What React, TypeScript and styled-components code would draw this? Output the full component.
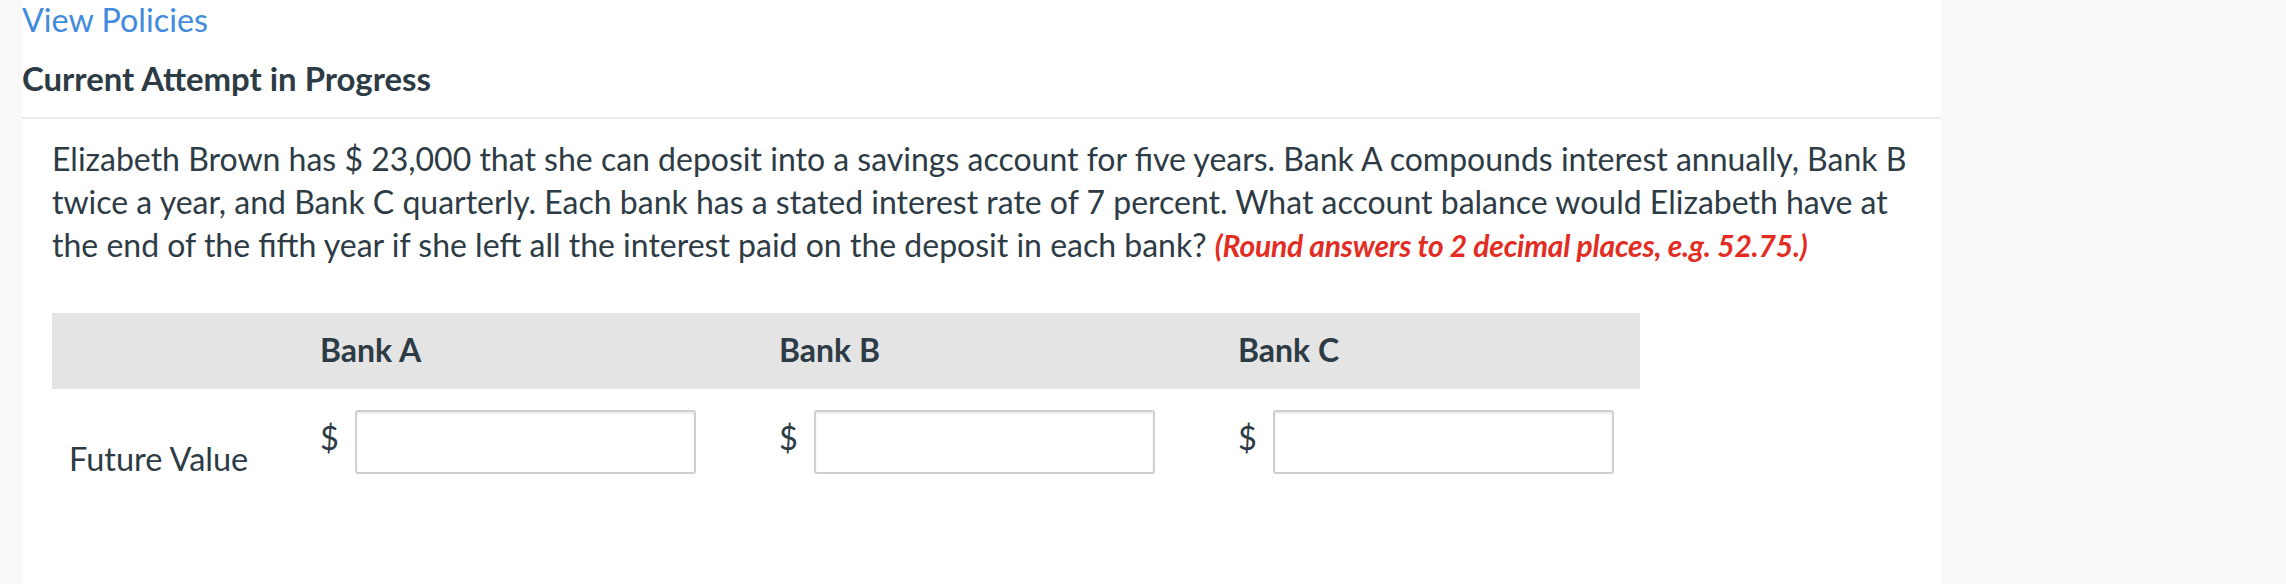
import React from "react";
import styled, { createGlobalStyle } from "styled-components";

const GlobalStyle = createGlobalStyle`
  html, body {
    margin: 0;
    padding: 0;
    background: #f9f9f9;
  }
  body {
    font-family: Lato, "Liberation Sans", sans-serif;
    color: #2d3b45;
  }
`;

const banks = ["Bank A", "Bank B", "Bank C"];

export default function App() {
  return (
    <>
      <GlobalStyle />
      <Page>
        <Panel>
          <PolicyLink href="#">View Policies</PolicyLink>
          <AttemptTitle>Current Attempt in Progress</AttemptTitle>
          <Question>
            <Prompt>
              Elizabeth Brown has $ 23,000 that she can deposit into a savings
              account for five years. Bank A compounds interest annually, Bank B
              twice a year, and Bank C quarterly. Each bank has a stated
              interest rate of 7 percent. What account balance would Elizabeth
              have at the end of the fifth year if she left all the interest
              paid on the deposit in each bank?{" "}
              <Hint>(Round answers to 2 decimal places, e.g. 52.75.)</Hint>
            </Prompt>

            <AnswerTable>
              <HeaderRow>
                <HeadCell />
                {banks.map((bank) => (
                  <HeadCell key={bank}>{bank}</HeadCell>
                ))}
              </HeaderRow>
              <BodyRow>
                <RowLabel>Future Value</RowLabel>
                {banks.map((bank) => (
                  <AnswerCell key={bank}>
                    <Currency>$</Currency>
                    <AnswerInput aria-label={`${bank} future value`} />
                  </AnswerCell>
                ))}
              </BodyRow>
            </AnswerTable>
          </Question>
        </Panel>
      </Page>
    </>
  );
}

const Page = styled.div`
  display: flex;
  min-height: 584px;
  padding-left: 22px;
`;

const Panel = styled.main`
  width: 1919px;
  min-height: 584px;
  background: #fff;
  display: flex;
  flex-direction: column;
`;

const PolicyLink = styled.a`
  display: block;
  font-size: 32.3px;
  line-height: 39px;
  color: #428bdc;
  text-decoration: none;
`;

const AttemptTitle = styled.h2`
  margin: 20px 0 0;
  padding: 0 0 18px;
  font-size: 32.9px;
  line-height: 39.5px;
  font-weight: 700;
  border-bottom: 2px solid #ececec;
`;

const Question = styled.section`
  padding: 18px 0 0 30px;
`;

const Prompt = styled.p`
  margin: 0;
  width: 1866px;
  font-size: 32px;
  line-height: 43.2px;
`;

const Hint = styled.strong`
  font-size: 30px;
  line-height: 1;
  font-style: italic;
  font-weight: 700;
  letter-spacing: -0.2px;
  color: #e32d23;
`;

const AnswerTable = styled.div`
  margin-top: 47px;
  width: 1588px;
`;

const HeaderRow = styled.div`
  display: grid;
  grid-template-columns: 268px 459px 459px 1fr;
  height: 76px;
  background: #e4e4e4;
`;

const HeadCell = styled.div`
  font-size: 32px;
  font-weight: 700;
  line-height: 74px;
`;

const BodyRow = styled.div`
  display: grid;
  grid-template-columns: 268px 459px 459px 1fr;
  align-items: start;
`;

const RowLabel = styled.div`
  padding: 48px 0 0 17px;
  font-size: 32.5px;
  line-height: 43.2px;
`;

const AnswerCell = styled.div`
  display: flex;
  align-items: flex-start;
`;

const Currency = styled.span`
  width: 35px;
  padding-top: 27px;
  font-size: 32.5px;
  line-height: 43.2px;
`;

const AnswerInput = styled.input`
  margin-top: 21px;
  width: 341px;
  height: 64px;
  box-sizing: border-box;
  border: 2px solid #cfcfcf;
  border-radius: 3px;
  box-shadow: inset 0 2px 2px rgba(0, 0, 0, 0.08);
  background: #fff;
  font: inherit;
  font-size: 28.8px;
  padding: 0 12px;
`;
